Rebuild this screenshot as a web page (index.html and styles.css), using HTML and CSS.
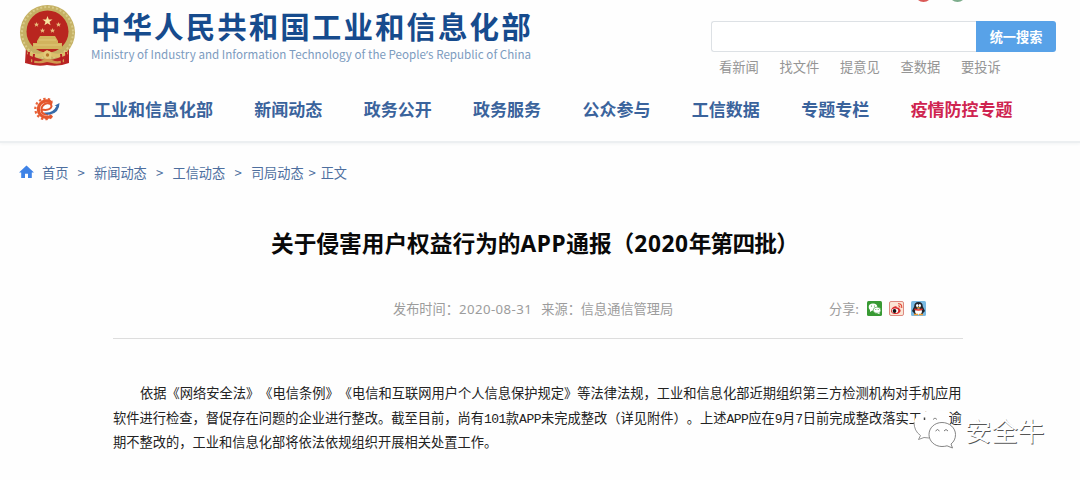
FILE: index.html
```html
<!DOCTYPE html>
<html lang="zh-CN">
<head>
<meta charset="utf-8">
<title>关于侵害用户权益行为的APP通报（2020年第四批）</title>
<link rel="stylesheet" href="styles.css">
</head>
<body>
<header class="header">
  <div class="brand-row">
    <svg class="emblem" viewBox="0 0 57 62">
      <path d="M7 42L6 59Q18 63 28 61Q40 63 50 59L50 42Z" fill="#b92724"/>
      <circle cx="28.500" cy="28.500" r="27.500" fill="#c5b164"/>
      <circle cx="28.500" cy="28.500" r="25.500" fill="none" stroke="#d9cb88" stroke-width="2" stroke-dasharray="2 2"/>
      <circle cx="28.500" cy="27.500" r="21" fill="#b9261f"/>
      <path d="M28.500 12l1.300 3.500h3.700l-3 2.200 1.100 3.600-3.100-2.100-3.100 2.100 1.100-3.600-3-2.200h3.700z" fill="#f7e6a0"/>
      <g fill="#e9bd7c"><path id="s" d="M17.500 18l.7 1.800h1.900l-1.500 1.100.6 1.900-1.700-1.100-1.700 1.100.6-1.900-1.500-1.100h1.900z"/><use href="#s" x="22" y="0"/><use href="#s" x="6" y="6"/><use href="#s" x="16" y="6"/></g>
      <path d="M21 32h15l3 5v2h4v6H14v-6h4v-2z" fill="#d2b35d"/>
      <path d="M20 36h17M15 41h27" stroke="#e0c878" fill="none"/>
      <path d="M9 47q8 4 14 2l5-3 6 3q7 2 14-2l1 3q-8 5-15 3l-6-2-5 2q-7 2-15-3z" fill="#dcc06c"/>
      <path d="M12 55q7 4 12 1l4-3 5 3q7 3 12-1v3q-6 3-12 1l-5-1-4 1q-6 1-12-1z" fill="#d09a50"/>
      <path d="M10 48l-1 11M15 50l-1 10M42 50l1 10M47 48l1 11" stroke="#b81f24" stroke-width="2"/>
      <circle cx="28.500" cy="51" r="4" fill="#e3ca79"/><circle cx="28.500" cy="51" r="1.700" fill="#b5752a"/>
    </svg>
    <div class="brand">
      <div class="brand-cn">中华人民共和国工业和信息化部</div>
      <div class="brand-en">Ministry of Industry and Information Technology of the People<span class="quote">’</span>s Republic of China</div>
    </div>
    <div class="tools">
      <div class="dots"><i class="dot red"></i><i class="dot green"></i></div>
      <div class="search"><div class="field"></div><div class="button">统一搜索</div></div>
      <div class="quick"><span>看新闻</span><span>找文件</span><span>提意见</span><span>查数据</span><span>要投诉</span></div>
    </div>
  </div>
  <nav class="nav">
    <svg class="gear" viewBox="0 0 27 24">
      <circle cx="12.500" cy="12" r="10.200" fill="none" stroke="#e8643a" stroke-width="2.200" stroke-dasharray="2.400 2.180" pathLength="64.100"/>
      <path d="M19.500 6.300A8.300 8.300 0 1 0 19 18.500" fill="none" stroke="#e4572d" stroke-width="3.200"/>
      <path d="M19.500 2L27 1V23L20 20Z" fill="#fefefe"/>
      <path d="M8.500 12.500Q17 14 18.500 9.500Q18.500 6 14 6.200Q8.500 7.500 8.300 13Q9 18 15 17.500" fill="none" stroke="#e4572d" stroke-width="2"/>
      <path d="M11 15.500Q20 16.500 23.500 9L21.500 8.800L26.500 6Q26.500 16 16.500 17.800Q13 18 11 15.500Z" fill="#356ba9"/>
    </svg>
    <span>工业和信息化部</span><span>新闻动态</span><span>政务公开</span><span>政务服务</span><span>公众参与</span><span>工信数据</span><span>专题专栏</span><span class="hot">疫情防控专题</span>
  </nav>
</header>
<div class="crumbs">
  <svg class="home" viewBox="0 0 15 14"><path d="M7.500.5L15 7.500H12.800V13H9V8.800H6V13H2.200V7.500H0Z" fill="#3f83e6"/></svg>
  <span>首页</span><i>&gt;</i><span>新闻动态</span><i>&gt;</i><span>工信动态</span><i>&gt;</i><span>司局动态</span><i class="tight">&gt;</i><span>正文</span>
</div>
<main class="article">
  <h1 class="title">关于侵害用户权益行为的<span class="wide">APP</span>通报（<span class="wide">2020</span><span class="close">年第四批）</span></h1>
  <div class="meta">
    <span class="date">发布时间：<b class="num">2020-08-31</b></span><span class="source">来源：信息通信管理局</span>
    <div class="share">
      <span>分享:</span>
      <svg viewBox="0 0 15 15"><rect width="15" height="15" rx="1.500" fill="#389a34"/><ellipse cx="6" cy="6" rx="4.300" ry="3.500" fill="#fff"/><path d="M3 8v3l3-2z" fill="#fff"/><ellipse cx="10" cy="9.200" rx="3.800" ry="3.100" fill="#fff" stroke="#389a34" stroke-width=".6"/><path d="M10 12l2.500 1.300v-2z" fill="#fff"/><g fill="#389a34"><circle cx="4.500" cy="5" r=".6"/><circle cx="7.500" cy="5" r=".6"/><circle cx="8.800" cy="8.600" r=".5"/><circle cx="11.200" cy="8.600" r=".5"/></g></svg>
      <svg viewBox="0 0 15 15"><rect x=".5" y=".5" width="14" height="14" rx="1.500" fill="#fbe5d5" stroke="#dd8a80"/><path d="M2 9.500Q3 5.500 6.500 5.200Q8 5 7.800 6.500Q11 6 10.500 8Q12.500 9 11 11.200Q8.500 13.800 4.500 12.800Q1.800 12 2 9.500Z" fill="#d92b2c"/><ellipse cx="6" cy="9.700" rx="3.200" ry="2.300" fill="#fff"/><circle cx="5.500" cy="10" r="1.900" fill="#111"/><path d="M9 2.800Q13 2.300 12.800 7M9.200 4.800Q11 4.800 11 6.500" fill="none" stroke="#e04432" stroke-width="1.100"/></svg>
      <svg viewBox="0 0 15 15"><rect width="15" height="15" rx="1.500" fill="#79b9e2"/><path d="M7.500 1Q11.800 1 11.800 5.500L14 10L12.500 11.500L11.500 13H3.500L2.500 11.500L1 10L3.200 5.500Q3.200 1 7.500 1Z" fill="#20252d"/><ellipse cx="7.500" cy="10.500" rx="3.400" ry="3" fill="#fff"/><ellipse cx="6.200" cy="4.500" rx="1.200" ry="1.600" fill="#fff"/><ellipse cx="8.800" cy="4.500" rx="1.200" ry="1.600" fill="#fff"/><path d="M5 6.300h5L7.500 7.600z" fill="#f3a42b"/><path d="M3.500 8Q7.500 10 11.500 8" fill="none" stroke="#e03128" stroke-width="1.600"/><path d="M3 13.500h4M8 13.500h4" stroke="#ef9a2f" stroke-width="1.400"/></svg>
    </div>
  </div>
  <div class="body">
    <p class="line first">依据《网络安全法》《电信条例》《电信和互联网用户个人信息保护规定》等法律法规，工业和信息化部近期组织第三方检测机构对手机应用</p>
    <p class="line">软件进行检查，督促存在问题的企业进行整改。截至目前，尚有<span class="latin">101</span>款<span class="latin">APP</span>未完成整改（详见附件）。上述<span class="latin">APP</span>应在<span class="latin">9</span>月<span class="latin">7</span>日前完成整改落实工作，逾</p>
    <p class="line">期不整改的，工业和信息化部将依法依规组织开展相关处置工作。</p>
  </div>
</main>
<div class="watermark">
  <svg viewBox="0 0 48 42">
    <path d="M10 3C5 5 2 9 2 14Q2 22 8 26L7 30L18 29L38 16L36 1H15Z" fill="#fff"/>
    <path d="M2 12Q2 21 8.500 25.500L6.500 29.500L12 27.500L17 28" fill="none" stroke="#888" stroke-width=".9"/>
    <path d="M12.500 7.500v2.500" fill="none" stroke="#444" stroke-width="1.500"/>
    <path d="M21 9.500q2-3 4 0" fill="none" stroke="#888"/>
    <path d="M30 12.500C22.500 12.500 17 18 17 24.500S22.500 36.500 30 36.500Q33 36.500 35 35.800L40.500 38L39 34Q43.500 30.500 43.500 24.500C43.500 18 37.500 12.500 30 12.500Z" fill="#fff" stroke="#777" stroke-width=".9"/>
    <path d="M23.500 21q2-3 4 0M32 21q2-3 4 0" fill="none" stroke="#777"/>
  </svg>
  <span>安全牛</span>
</div>
</body>
</html>
```
FILE: styles.css
```css
* { box-sizing: border-box; }
body {
  margin: 0;
  width: 1080px;
  height: 480px;
  overflow: hidden;
  position: relative;
  background: #fefefe;
  font-family: "Noto Sans CJK SC", sans-serif;
  text-spacing-trim: space-all;
  white-space: nowrap;
}
i, b { font-style: normal; font-weight: 400; }
svg { display: block; flex: none; }

.header { height: 143px; border-bottom: 2px solid #eceff1; box-shadow: 0 1px 3px #f1f3f4; }
.brand-row { display: flex; height: 83px; padding-left: 19px; }
.emblem { width: 57px; height: 62px; margin-top: 4px; }
.brand { width: 445px; margin-left: 15px; padding-top: 8px; }
.brand-cn { font-size: 29.5px; line-height: 34px; font-weight: 700; letter-spacing: 2.05px; color: #164b8d; }
.brand-en { margin-top: 4px; font-size: 11.6px; line-height: 16px; letter-spacing: .02px; color: #7c9bbf; }
.quote { font-family: "Noto Sans", sans-serif; }
.tools { margin-left: 175px; width: 345px; }
.dots { display: flex; gap: 17px; height: 21px; padding-left: 204px; }
.dot { width: 17px; height: 17px; margin-top: -15px; border-radius: 50%; }
.red { background: #da5a57; }
.green { background: #7dad8c; }
.search { display: flex; height: 31px; }
.field { width: 265px; border: 1px solid #dde1e5; border-right: 0; border-radius: 3px 0 0 3px; background: #fff; }
.button { width: 80px; border-radius: 0 3px 3px 0; background: #58a2e8; color: #fff; font-size: 13.2px; font-weight: 700; line-height: 31px; text-align: center; }
.quick { display: flex; gap: 20.6px; padding-left: 8px; font-size: 13.3px; line-height: 30px; color: #959595; }

.nav { display: flex; align-items: center; gap: 41.4px; height: 50px; padding-left: 33px; font-size: 17px; font-weight: 700; color: #3a639c; }
.gear { width: 27px; height: 24px; margin: 2px -7.5px 0 0; }
.hot { color: #cf2450; }

.crumbs { display: flex; align-items: center; height: 30px; margin-top: 14px; padding-left: 19px; font-size: 13.2px; color: #4d6e9e; }
.home { width: 15px; height: 14px; margin-right: 8px; }
.crumbs i { width: 25.7px; text-align: center; }
.crumbs .tight { width: 17px; }

.article { width: 850px; margin-left: 113px; }
.title { margin: 39px 0 0 158px; font: 700 22.7px/36px "Noto Sans", "Noto Sans CJK SC", sans-serif; color: #090909; }
.wide { letter-spacing: .6px; }
.close { letter-spacing: -.8px; }
.meta { display: flex; align-items: center; height: 77px; padding: 17px 37px 0 280px; border-bottom: 1px solid #ddd; font-size: 13.2px; color: #9c9c9c; }
.num { font-family: "Noto Sans", sans-serif; letter-spacing: .45px; }
.source { margin-left: 9px; }
.share { display: flex; align-items: center; gap: 7px; margin-left: auto; }
.share span { margin-right: 1px; }
.share svg { width: 15px; height: 15px; }
.body { padding-top: 42px; }
.line { margin: 0; height: 24.6px; font-size: 13.25px; line-height: 24.6px; color: #222; }
.first { padding-left: 27px; }
.latin { font-family: "Liberation Mono", monospace; font-size: 13px; letter-spacing: -.53px; }

/* Stamp laid over the article text */
.watermark { position: absolute; left: 912px; top: 410px; display: flex; align-items: center; gap: 5px; }
.watermark svg { width: 48px; height: 42px; }
.watermark span { font-size: 26.5px; line-height: 42px; margin-top: -2px; color: #fff; text-shadow: .8px 1px .6px #555; }
```
